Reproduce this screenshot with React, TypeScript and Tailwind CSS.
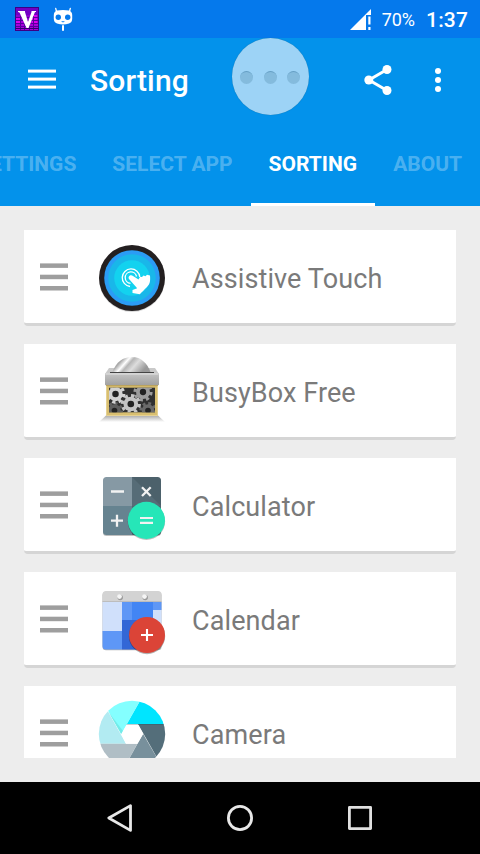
import type { ReactNode } from "react";

function AudioIcon() {
  return (
    <svg className="h-6 w-6" viewBox="0 0 24 24">
      <rect width="24" height="24" fill="#3b0085" />
      <rect x="1" y="1" width="22" height="9" fill="#7200c4" />
      <rect x="1" y="8" width="22" height="6" fill="#8d00d2" />
      <rect x="1" y="13" width="22" height="10" fill="#a800dc" />
      <path d="M1 11h4v5H1zM17 8h5v8h-5z" fill="#dc00ef" />
      <path d="M1 10.500h22M1 13.500h22M1 16.500h22M1 19.500h22M5.500 9v14M9.500 14v9M14.500 14v9M18.500 9v14" stroke="#55009c" strokeWidth="1" />
      <path d="M0 21.500h24" stroke="#30006e" strokeWidth="1" />
      <path d="M3 4H10V5L13 15L16.500 5V4H21V5H20L13.500 21H11.500L4.500 5.500L3 5Z" fill="#fff" />
    </svg>
  );
}

function RobotIcon() {
  return (
    <svg className="h-6 w-5" viewBox="0 0 20 24">
      <path d="M3.500 4.500 2.700 1.300M16.500 4.500 17.300 1.300" stroke="#fff" strokeWidth="1.300" strokeLinecap="round" />
      <path d="M4 3.500Q10 2.700 16 3.500Q19.200 4.500 19.200 8V12Q19 15.500 16 16.500Q10 18.300 4 16.500Q1 15.500 .8 12V8Q.8 4.500 4 3.500Z" fill="#fff" />
      <circle cx="5.300" cy="10.300" r="2.700" fill="#0579ec" />
      <circle cx="14.700" cy="10.300" r="2.700" fill="#0579ec" />
      <path d="M8 14.300h4l-2 1.200z" fill="#0579ec" />
      <path d="M10 19V23" stroke="#fff" strokeWidth="2" strokeLinecap="round" />
    </svg>
  );
}

function SignalIcon() {
  return (
    <svg className="h-[21px] w-[22px]" viewBox="0 0 22 21">
      <path d="M0 21 21 0V6H16V21Z" fill="#fff" />
      <path d="M18.300 7.500h2.200v8h-2.200zM18.300 18h2.200v3h-2.200z" fill="#fff" />
    </svg>
  );
}

function TouchIcon() {
  return (
    <svg className="h-[72px] w-[72px]" viewBox="0 0 72 72">
      <circle cx="36" cy="37" r="33" fill="#000" opacity=".15" />
      <circle cx="36" cy="36" r="33" fill="#231f20" />
      <circle cx="36" cy="36" r="27.800" fill="#2b9cf5" />
      <circle cx="36" cy="36" r="23.800" fill="#19b7e9" />
      <circle cx="36" cy="36" r="17.800" fill="#13d2ef" />
      <g fill="none" stroke="#fff" strokeWidth="1.300">
        <path d="M34 44.500A8.800 8.800 0 1 1 43.800 35" />
        <path d="M34.500 41.300A5.700 5.700 0 1 1 40.500 34.500" />
      </g>
      <path d="M33 37C31.500 34.500 34.500 32 37 34L42.500 37.500 44 35 46 35 47.500 33.600 49.500 34.200 51 32.800 54 33.500C54.500 39 54 42 51 45C48 48 46 50 43.800 52.200L36.500 51V48L41.200 46.200Z" fill="#fff" />
    </svg>
  );
}

function Gear({ x, y, r, fill }: { x: number; y: number; r: number; fill: string }) {
  return (
    <g transform={`translate(${x} ${y}) scale(${r / 9})`}>
      <circle r="6.600" fill={fill} />
      <circle r="7.500" fill="none" stroke={fill} strokeWidth="3.200" strokeDasharray="2.950 2.940" />
      <circle r="3" fill="#222" />
    </g>
  );
}

function GearBoxIcon() {
  return (
    <svg className="h-[72px] w-[72px]" viewBox="0 0 72 72">
      <defs>
        <linearGradient id="saw" x1="0" x2="1" y1="0" y2=".35">
          <stop offset="0" stopColor="#999" />
          <stop offset=".28" stopColor="#aaa" />
          <stop offset=".42" stopColor="#fff" />
          <stop offset=".53" stopColor="#b5b5b5" />
          <stop offset=".7" stopColor="#ddd" />
          <stop offset="1" stopColor="#999" />
        </linearGradient>
        <linearGradient id="lid" x1="0" x2="0" y1="0" y2="1">
          <stop offset="0" stopColor="#c4c4c4" />
          <stop offset="1" stopColor="#a0a0a0" />
        </linearGradient>
        <linearGradient id="floor" x1="0" x2="0" y1="0" y2="1">
          <stop offset="0" stopColor="#aaa" />
          <stop offset="1" stopColor="#fff" />
        </linearGradient>
        <clipPath id="window"><rect x="13" y="31.700" width="46" height="24.600" /></clipPath>
      </defs>
      <path d="M10 59.500H62L69 66H3Z" fill="url(#floor)" />
      <path d="M13 12H59L63 18H9Z" fill="#c9c9c9" />
      <path d="M14 16.500H58" stroke="#444" strokeWidth="1" />
      <path d="M16.500 16C20 6 27 1 36 1S51 7 54.500 16Z" fill="url(#saw)" />
      <rect x="9" y="17.300" width="54" height="12" rx=".8" fill="url(#lid)" />
      <path d="M9.500 18H62.500" stroke="#e2e2e2" />
      <rect x="10" y="29.300" width="52" height="30.400" fill="#d9bf70" />
      <path d="M10 29.700H62" stroke="#b39a52" />
      <path d="M10.500 30V59.500H61.500V30" fill="none" stroke="#e5d193" />
      <rect x="13" y="31.700" width="46" height="24.600" fill="#303030" />
      <g clipPath="url(#window)">
        <Gear x={18.5} y={54.5} r={8.5} fill="#5e5e5e" />
        <Gear x={52} y={54.5} r={8.5} fill="#6a6a6a" />
        <Gear x={47} y={36} r={9.5} fill="#9c9c9c" />
        <Gear x={19.5} y={38} r={9.8} fill="#d2d2d2" />
        <Gear x={34.8} y={48} r={10} fill="#c4c4c4" />
      </g>
    </svg>
  );
}

function CalculatorIcon() {
  return (
    <svg className="h-[72px] w-[72px]" viewBox="0 0 72 72">
      <clipPath id="calc"><rect x="7" y="7" width="58" height="58" rx="3.500" /></clipPath>
      <rect x="7" y="8" width="58" height="58" rx="3.500" fill="#000" opacity=".25" />
      <g clipPath="url(#calc)">
        <path d="M7 7H36V36H7Z" fill="#8699a4" />
        <path d="M36 7H65V36H36Z" fill="#4c616b" />
        <path d="M36 7 65 36H36Z" fill="#566c77" />
        <path d="M7 36H36V65H7Z" fill="#668390" />
        <path d="M36 36H65V65H36Z" fill="#506670" />
      </g>
      <path d="M15 21.500H28M46 17.300 54.700 26M54.700 17.300 46 26M15 50.700H27M21 44.700V56.700" stroke="#f2f2f2" strokeWidth="2.300" />
      <circle cx="50.400" cy="51.300" r="18.700" fill="#000" opacity=".25" />
      <circle cx="50.400" cy="50.400" r="18.600" fill="#26e6b8" />
      <path d="M44 48H57M44 52.800H57" stroke="#f2f2f2" strokeWidth="2.200" />
    </svg>
  );
}

function CalendarIcon() {
  return (
    <svg className="h-[72px] w-[72px]" viewBox="0 0 72 72">
      <clipPath id="cal"><rect x="6.500" y="7" width="59" height="58.500" rx="3.500" /></clipPath>
      <rect x="6.500" y="7.800" width="59" height="58.500" rx="3.500" fill="#000" opacity=".3" />
      <g clipPath="url(#cal)">
        <path d="M6 7H66V18H6Z" fill="#d3d3d3" />
        <path d="M6 18H26V47H6ZM57 26H66V47H57Z" fill="#d0e0fb" />
        <path d="M26 18H36V36H26ZM57 18H66V26H57ZM6 47H26V66H6Z" fill="#5e97f6" />
        <path d="M36 18H57V36H36Z" fill="#4285f4" />
        <path d="M26 36H57V66H26Z" fill="#3367d6" />
        <path d="M6 17.500H66" stroke="#bdbdbd" />
      </g>
      <circle cx="24.200" cy="13.500" r="2.700" fill="#999" />
      <circle cx="49.200" cy="13.500" r="2.700" fill="#999" />
      <circle cx="23.500" cy="12.600" r="2.400" fill="#f5f5f5" />
      <circle cx="48.500" cy="12.600" r="2.400" fill="#f5f5f5" />
      <circle cx="51" cy="52" r="18.200" fill="#000" opacity=".3" />
      <circle cx="51" cy="51" r="18" fill="#db4437" />
      <path d="M45 51H57M51 45V57" stroke="#fff" strokeWidth="2.100" />
    </svg>
  );
}

function CameraIcon() {
  return (
    <svg className="h-[72px] w-[72px]" viewBox="0 0 72 72">
      <clipPath id="lens"><circle cx="36" cy="36" r="33.200" /></clipPath>
      <g clipPath="url(#lens)">
        <path d="M30.700 26 45.600 0H72V26Z" fill="#00e5ff" />
        <path d="M45.600 0 25.300 36.300 5 0Z" fill="#84ffff" />
        <path d="M12.300 13.700 25.300 36.300 27 33Z" fill="#6fe6e4" opacity=".8" />
        <path d="M4.500 0 30 45.700H0V0Z" fill="#b2ebf2" />
        <path d="M0 45.700H41.300L27 72H0Z" fill="#b0bec5" />
        <path d="M27 72 47 35.700 68 72Z" fill="#78909c" />
        <path d="M42 26H72V72H68Z" fill="#546e7a" />
        <path d="M30.700 26H70V27H30.700Z" fill="#35606d" opacity=".6" />
      </g>
      <path d="M25.300 36.100 30.700 26.500H42L47.200 36 41.500 45.700H30Z" fill="#fff" />
    </svg>
  );
}

const apps: { name: string; icon: ReactNode }[] = [
  { name: "Assistive Touch", icon: <TouchIcon /> },
  { name: "BusyBox Free", icon: <GearBoxIcon /> },
  { name: "Calculator", icon: <CalculatorIcon /> },
  { name: "Calendar", icon: <CalendarIcon /> },
  { name: "Camera", icon: <CameraIcon /> },
];

function AppCard({ name, icon }: { name: string; icon: ReactNode }) {
  return (
    <li className="flex h-24 shrink-0 items-center rounded-b-[4px] border-b-[3px] border-[#d5d5d5] bg-white pl-4">
      <svg className="mt-px h-7 w-7" viewBox="0 0 28 28" fill="#9e9e9e">
        <rect y="0.400" width="28" height="4.500" />
        <rect y="11.700" width="28" height="4.500" />
        <rect y="23" width="28" height="4.500" />
      </svg>
      <div className="ml-7 pt-[3px]">{icon}</div>
      <span className="ml-6 pt-1 text-[27px] leading-8 tracking-[0.1px] text-[#7a7a7a]">{name}</span>
    </li>
  );
}

export default function App() {
  return (
    <div className="relative flex h-[854px] w-[480px] flex-col overflow-hidden bg-[#ededed] font-['Roboto',sans-serif]">
      <div className="flex h-[38px] shrink-0 items-center bg-[#0579ec] pr-3 pl-[15px] text-white">
        <AudioIcon />
        <div className="ml-[14px]"><RobotIcon /></div>
        <div className="ml-auto"><SignalIcon /></div>
        <span className="ml-[10px] pt-0.5 text-[18px] leading-6">70%</span>
        <span className="ml-[11px] pt-0.5 text-[21px] leading-6 font-medium tracking-[0.15px]">1:37</span>
      </div>

      <header className="flex h-[168px] shrink-0 flex-col bg-[#0392eb] text-white">
        <div className="flex h-[84px] items-center pl-7">
          <svg className="h-[22px] w-7" viewBox="0 0 28 22" fill="#fff">
            <rect y="0.600" width="28" height="3" />
            <rect y="8.600" width="28" height="3" />
            <rect y="16.600" width="28" height="3" />
          </svg>
          <h1 className="ml-[34px] pt-0.5 text-[30px] leading-9 font-medium tracking-[0.15px]">Sorting</h1>
          <svg className="ml-auto h-[30px] w-7" viewBox="0 0 28 30">
            <path d="M23 4.500 5 15 23 25.500" fill="none" stroke="#fff" strokeWidth="3" />
            <circle cx="23" cy="4.500" r="4.500" fill="#fff" />
            <circle cx="4.800" cy="15" r="4.500" fill="#fff" />
            <circle cx="23" cy="25.500" r="4.500" fill="#fff" />
          </svg>
          <svg className="mr-[39px] ml-[43px] h-6 w-1.5" viewBox="0 0 6 24">
            <g fill="#fff">
              <circle cx="3" cy="3" r="3" />
              <circle cx="3" cy="12" r="3" />
              <circle cx="3" cy="21" r="3" />
            </g>
          </svg>
        </div>
        <nav className="flex h-[84px] justify-end text-[21px] leading-6 font-bold whitespace-nowrap">
          <div className="flex items-center px-[18px] text-white/30">SETTINGS</div>
          <div className="flex items-center px-[18px] text-white/30">SELECT APP</div>
          <div className="flex items-center border-b-[3px] border-white px-[18px] pt-[3px]">SORTING</div>
          <div className="flex items-center px-[18px] text-white/30">ABOUT</div>
        </nav>
      </header>

      <main className="h-[576px] shrink-0 p-6">
        <ul className="flex h-full flex-col gap-[18px] overflow-hidden">
          {apps.map((app) => (
            <AppCard key={app.name} name={app.name} icon={app.icon} />
          ))}
        </ul>
      </main>

      <footer className="flex h-[72px] shrink-0 items-center justify-center gap-[92px] bg-black">
        <svg className="h-7 w-7" viewBox="0 0 28 28" fill="none" stroke="#e8e8e8" strokeWidth="2.800" strokeLinejoin="round">
          <path d="M2.800 14 24.500 1.600V26.400Z" />
        </svg>
        <svg className="h-7 w-7" viewBox="0 0 28 28" fill="none" stroke="#e8e8e8" strokeWidth="2.800">
          <circle cx="14" cy="14" r="11.600" />
        </svg>
        <svg className="h-7 w-7" viewBox="0 0 28 28" fill="none" stroke="#e0e0e0" strokeWidth="2.800" strokeLinejoin="round">
          <rect x="3.400" y="3.400" width="21.200" height="21.200" />
        </svg>
      </footer>

      <div className="absolute top-[38px] left-[231.5px] flex h-[77px] w-[77px] items-center justify-center gap-[10.5px] rounded-full bg-[#9dd3f6] pt-px shadow-[0_0_1px_#1b6e9e]">
        <div className="h-[13px] w-[13px] rounded-full border-t border-[#659fc4] bg-[#84bbdd]" />
        <div className="h-[13px] w-[13px] rounded-full border-t border-[#659fc4] bg-[#84bbdd]" />
        <div className="h-[13px] w-[13px] rounded-full border-t border-[#659fc4] bg-[#84bbdd]" />
      </div>
    </div>
  );
}
